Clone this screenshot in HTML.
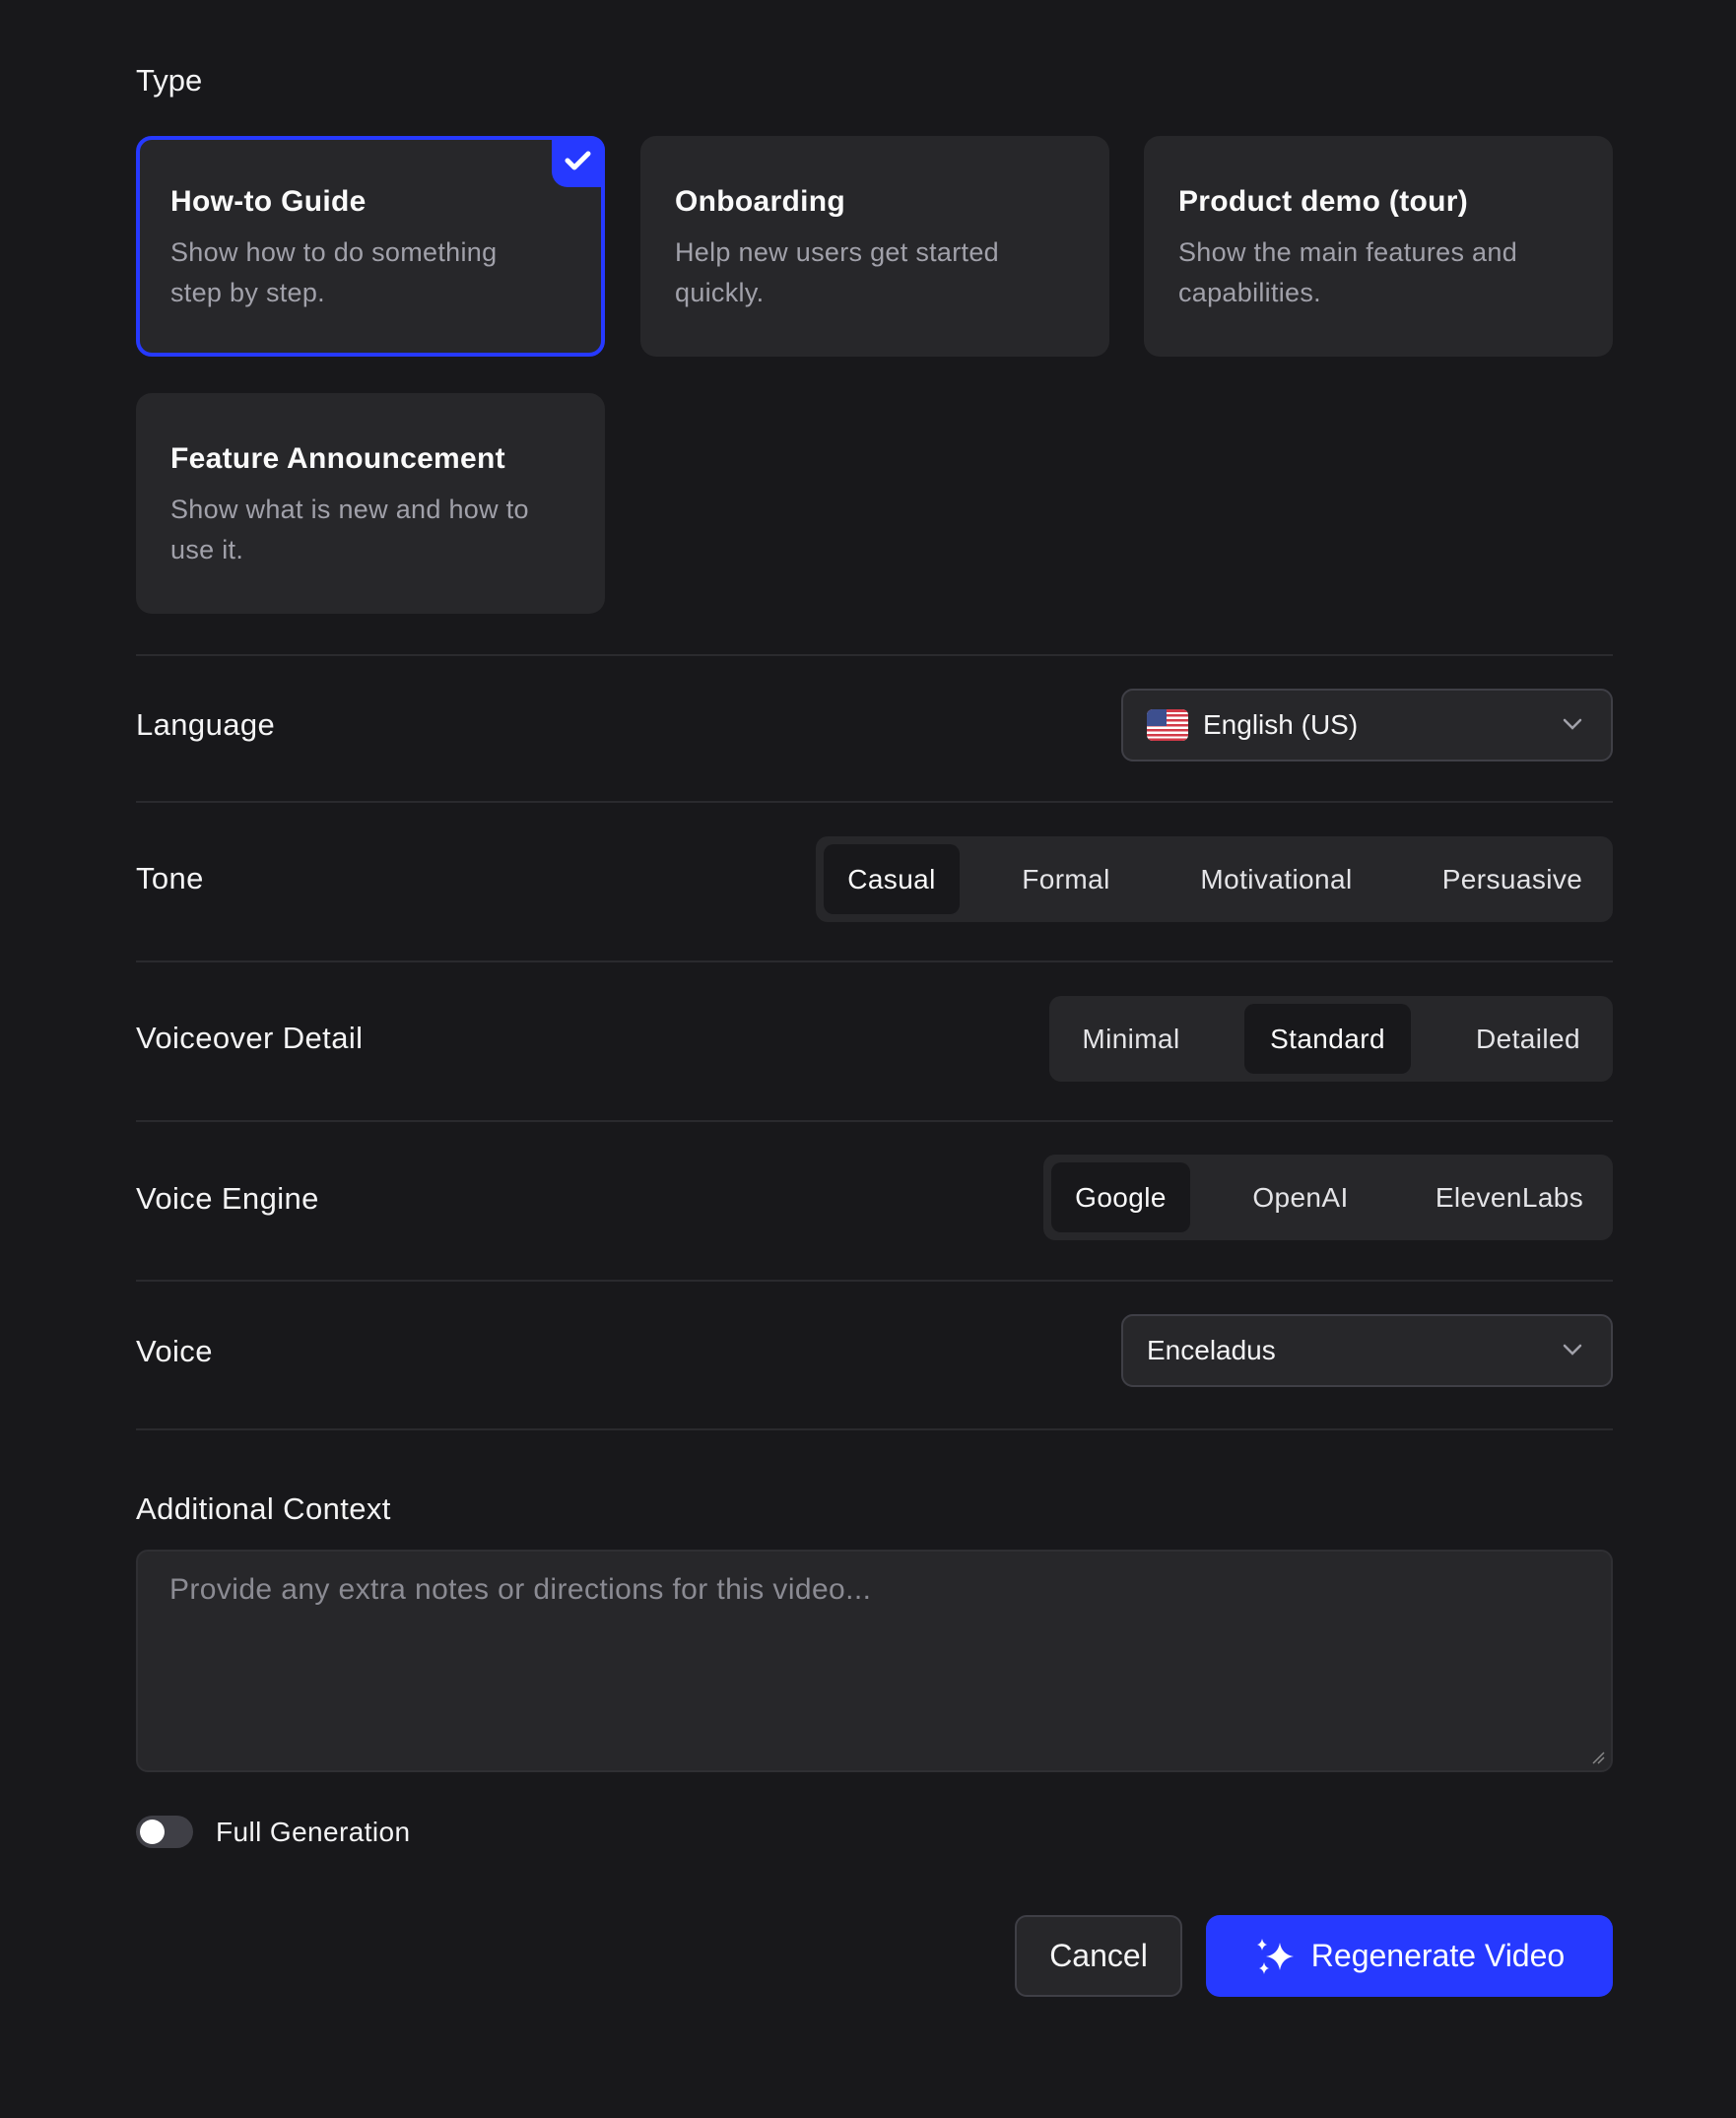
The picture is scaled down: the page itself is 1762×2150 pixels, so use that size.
<!DOCTYPE html>
<html><head><meta charset="utf-8"><style>
*{box-sizing:border-box;margin:0;padding:0}
body{width:1762px;height:2150px;background:#18181b;font-family:"Liberation Sans",sans-serif;color:#f4f4f5;position:relative;overflow:hidden}
.a{position:absolute}
.card{position:absolute;background:#27272a;border-radius:16px;width:476px;height:224px;padding:50px 34px 0 35px}
.card h3{font-size:30px;font-weight:bold;color:#fafafa;margin-bottom:14px;letter-spacing:0.3px}
.card p{font-size:27px;line-height:41px;color:#a1a1aa;letter-spacing:0.3px}
.sel{border:4px solid #2639ff;padding:46px 30px 0 31px}
.check{position:absolute;right:-4px;top:-4px;width:54px;height:52px;background:#2639ff;border-radius:0 14px 0 16px}
.div{position:absolute;left:138px;width:1499px;height:2px;background:#2a2a2e}
.lbl{position:absolute;left:138px;font-size:31px;color:#f4f4f5;transform:translateY(-50%);letter-spacing:0.4px}
.dd{position:absolute;left:1138px;width:499px;height:74px;border:2px solid #3f3f46;border-radius:12px;background:#27272a;display:flex;align-items:center;padding-left:24px;font-size:28px}
.chev{position:absolute;right:28px;top:26px}
.seg{position:absolute;background:#27272a;border-radius:12px;height:87px}
.opt{position:absolute;top:8px;height:71px;line-height:71px;text-align:center;font-size:28px;color:#e4e4e7;border-radius:10px;letter-spacing:0.4px}
.on{background:#18181b;color:#fafafa}
</style></head><body>
<div class="a" style="left:138px;top:64px;font-size:31px">Type</div>

<div class="card sel" style="left:138px;top:138px"><div class="check"><svg width="54" height="52" viewBox="0 0 54 52"><path d="M16 25 L23 32 L37 18" stroke="#fff" stroke-width="5" fill="none" stroke-linecap="round" stroke-linejoin="round"/></svg></div><h3>How-to Guide</h3><p>Show how to do something<br>step by step.</p></div>
<div class="card" style="left:650px;top:138px"><h3>Onboarding</h3><p>Help new users get started<br>quickly.</p></div>
<div class="card" style="left:1161px;top:138px"><h3>Product demo (tour)</h3><p>Show the main features and<br>capabilities.</p></div>
<div class="card" style="left:138px;top:399px"><h3>Feature Announcement</h3><p>Show what is new and how to<br>use it.</p></div>

<div class="div" style="top:664px"></div>
<div class="lbl" style="top:736px">Language</div>
<div class="dd" style="top:699px"><svg width="42" height="32" viewBox="0 0 42 32" style="margin-right:15px"><defs><clipPath id="c"><rect width="42" height="32" rx="6"/></clipPath></defs><g clip-path="url(#c)"><rect width="42" height="32" fill="#fff"/><g fill="#d33a48"><rect y="0" width="42" height="3"/><rect y="5" width="42" height="2.5"/><rect y="10" width="42" height="2.5"/><rect y="15" width="42" height="2.5"/><rect y="20" width="42" height="2.5"/><rect y="25" width="42" height="2.5"/><rect y="29.5" width="42" height="2.5"/></g><rect width="20" height="17" fill="#3d4f8f"/></g></svg>English (US)<svg class="chev" width="22" height="16" viewBox="0 0 22 16"><path d="M3 4 L11 12 L19 4" stroke="#a1a1aa" stroke-width="2.5" fill="none" stroke-linecap="round"/></svg></div>

<div class="div" style="top:813px"></div>
<div class="lbl" style="top:892px">Tone</div>
<div class="seg" style="left:828px;top:849px;width:809px">
<div class="opt on" style="left:8px;width:138px">Casual</div>
<div class="opt" style="left:184px;width:140px">Formal</div>
<div class="opt" style="left:380px;width:175px">Motivational</div>
<div class="opt" style="left:617px;width:180px">Persuasive</div></div>

<div class="div" style="top:975px"></div>
<div class="lbl" style="top:1054px">Voiceover Detail</div>
<div class="seg" style="left:1065px;top:1011px;width:572px">
<div class="opt" style="left:-2px;width:170px">Minimal</div>
<div class="opt on" style="left:198px;width:169px">Standard</div>
<div class="opt" style="left:401px;width:170px">Detailed</div></div>

<div class="div" style="top:1137px"></div>
<div class="lbl" style="top:1217px">Voice Engine</div>
<div class="seg" style="left:1059px;top:1172px;width:578px">
<div class="opt on" style="left:8px;width:141px">Google</div>
<div class="opt" style="left:190px;width:142px">OpenAI</div>
<div class="opt" style="left:377px;width:192px">ElevenLabs</div></div>

<div class="div" style="top:1299px"></div>
<div class="lbl" style="top:1372px">Voice</div>
<div class="dd" style="top:1334px">Enceladus<svg class="chev" width="22" height="16" viewBox="0 0 22 16"><path d="M3 4 L11 12 L19 4" stroke="#a1a1aa" stroke-width="2.5" fill="none" stroke-linecap="round"/></svg></div>

<div class="div" style="top:1450px"></div>
<div class="lbl" style="top:1532px">Additional Context</div>
<div class="a" style="left:138px;top:1573px;width:1499px;height:226px;background:#27272a;border:2px solid #2f2f33;border-radius:12px;padding:22px 32px;font-size:30px;color:#8b8b93;letter-spacing:0.4px">Provide any extra notes or directions for this video...
<svg class="a" style="right:6px;bottom:6px" width="14" height="14"><path d="M2 13 L13 2 M7 13 L13 7" stroke="#888" stroke-width="1.5"/></svg></div>

<div class="a" style="left:138px;top:1843px;width:58px;height:33px;border-radius:17px;background:#3f3f46"><div class="a" style="left:4px;top:4px;width:25px;height:25px;border-radius:50%;background:#fff"></div></div>
<div class="a" style="left:219px;top:1843px;font-size:28px;line-height:33px;letter-spacing:0.4px">Full Generation</div>

<div class="a" style="left:1030px;top:1944px;width:170px;height:83px;border:2px solid #3f3f46;border-radius:12px;background:#27272a;text-align:center;line-height:79px;font-size:32px">Cancel</div>
<div class="a" style="left:1224px;top:1944px;width:413px;height:83px;border-radius:14px;background:#2639ff;display:flex;align-items:center;justify-content:center;font-size:32px;color:#fff"><svg width="44" height="40" viewBox="0 0 44 40" style="margin-right:14px"><path d="M26 6 Q28 18 40 20 Q28 22 26 34 Q24 22 12 20 Q24 18 26 6Z" fill="#fff"/><path d="M8 2 Q9 7 13 8 Q9 9 8 14 Q7 9 3 8 Q7 7 8 2Z" fill="#fff"/><path d="M10 26 Q11 31 15 32 Q11 33 10 38 Q9 33 5 32 Q9 31 10 26Z" fill="#fff"/></svg>Regenerate Video</div>
</body></html>
